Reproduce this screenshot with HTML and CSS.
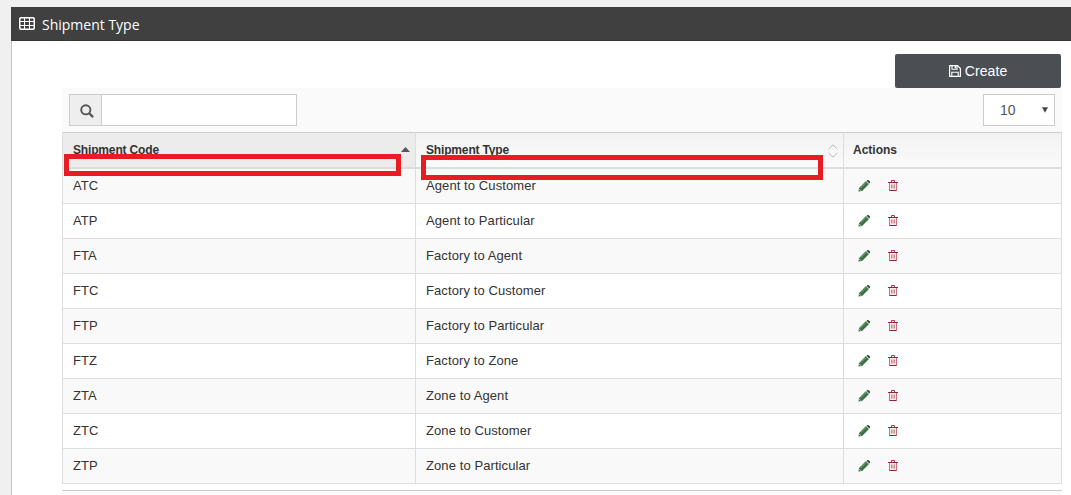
FILE: index.html
```
<!DOCTYPE html>
<html lang="en">
<head>
<meta charset="utf-8">
<title>Shipment Type</title>
<link rel="stylesheet" href="styles.css">
</head>
<body>
<svg class="sprite" aria-hidden="true">
  <symbol id="pencil" viewBox="0 0 12 12">
    <path d="M.4 11.6 1.1 7.9 8 1 11 4 4.1 10.9Z" fill="#3a7046"/>
    <path d="M8.6.7 9.5 0h.8l1.7 1.6v.9l-.8 1Z" fill="#244d38"/>
    <path d="M2.6 7.9 8 2.6" stroke="#8fb77c" stroke-width=".8"/>
    <path d="M1.4 9.2 2.8 10.6" stroke="#e5edcf" stroke-width="1"/>
    <path d="M8 1.4 10.7 4.1" stroke="#d5e2c5" stroke-width=".6"/>
  </symbol>
  <symbol id="trash" viewBox="0 0 10 11">
    <path d="M1.5 2.5V10.5H8.5V2.5" fill="#fbe9e7" stroke="#c9707c"/>
    <path d="M0 2.5H10M1.5 10.5H8.5" stroke="#8c2440" fill="none"/>
    <path d="M3.5 2V.5H6.5V2" fill="none" stroke="#a03a50"/>
    <path d="M3.5 4.5V8.5M5 4.5V8.5M6.5 4.5V8.5" stroke="#b67378" stroke-width=".8"/>
  </symbol>
</svg>
<div class="panel">
  <header class="panel-head">
    <svg class="table-icon" viewBox="0 0 16 13"><rect x=".75" y=".75" width="14.5" height="11.5" rx="1.2" fill="none" stroke="#fff" stroke-width="1.5"/><path d="M1 4.5H15M1 8.5H15M5.5 1V12M10.5 1V12" stroke="#fff"/></svg>
    <h1>Shipment Type</h1>
  </header>
  <main class="content">
    <button class="create"><svg class="save" viewBox="0 0 12 12"><path d="M.6.6H8.5L11.4 3.5V11.4H.6Z" fill="none" stroke="#fff" stroke-width="1.2" stroke-linejoin="round"/><path d="M3 .6V4.2H8V.6M2.8 11.4V7.2H9.2V11.4" fill="none" stroke="#fff" stroke-width="1.1"/><path d="M6.4 1V3.4" stroke="#fff" stroke-width="1.4"/></svg><span>Create</span></button>
    <div class="toolbar">
      <div class="search">
        <span class="addon"><svg viewBox="0 0 14 14"><circle cx="5.8" cy="5.8" r="4.6" fill="none" stroke="#555" stroke-width="1.9"/><path d="M9.2 9.2 13.1 13.1" stroke="#555" stroke-width="2.3"/></svg></span>
        <input type="text" aria-label="Search">
      </div>
      <div class="length"><span>10</span><svg viewBox="0 0 6 6"><path d="M0 .2H6L3 5.8Z" fill="#444"/></svg></div>
    </div>
    <div class="table-wrap">
      <table>
        <colgroup><col class="c1"><col class="c2"><col class="c3"></colgroup>
        <thead><tr>
          <th class="sorted">Shipment Code<svg class="sort asc" viewBox="0 0 9 5"><path d="M0 5 4.5 0 9 5Z" fill="#555"/></svg></th>
          <th>Shipment Type<svg class="sort both" viewBox="0 0 10 14"><path d="M.7 5 5 .8 9.3 5M.7 9 5 13.2 9.3 9" fill="none" stroke="#bbb"/></svg></th>
          <th class="last">Actions</th>
        </tr></thead>
        <tbody>
          <tr><td>ATC</td><td>Agent to Customer</td><td><div class="actions"><svg class="edit"><use href="#pencil"/></svg><svg class="remove"><use href="#trash"/></svg></div></td></tr>
          <tr><td>ATP</td><td>Agent to Particular</td><td><div class="actions"><svg class="edit"><use href="#pencil"/></svg><svg class="remove"><use href="#trash"/></svg></div></td></tr>
          <tr><td>FTA</td><td>Factory to Agent</td><td><div class="actions"><svg class="edit"><use href="#pencil"/></svg><svg class="remove"><use href="#trash"/></svg></div></td></tr>
          <tr><td>FTC</td><td>Factory to Customer</td><td><div class="actions"><svg class="edit"><use href="#pencil"/></svg><svg class="remove"><use href="#trash"/></svg></div></td></tr>
          <tr><td>FTP</td><td>Factory to Particular</td><td><div class="actions"><svg class="edit"><use href="#pencil"/></svg><svg class="remove"><use href="#trash"/></svg></div></td></tr>
          <tr><td>FTZ</td><td>Factory to Zone</td><td><div class="actions"><svg class="edit"><use href="#pencil"/></svg><svg class="remove"><use href="#trash"/></svg></div></td></tr>
          <tr><td>ZTA</td><td>Zone to Agent</td><td><div class="actions"><svg class="edit"><use href="#pencil"/></svg><svg class="remove"><use href="#trash"/></svg></div></td></tr>
          <tr><td>ZTC</td><td>Zone to Customer</td><td><div class="actions"><svg class="edit"><use href="#pencil"/></svg><svg class="remove"><use href="#trash"/></svg></div></td></tr>
          <tr><td>ZTP</td><td>Zone to Particular</td><td><div class="actions"><svg class="edit"><use href="#pencil"/></svg><svg class="remove"><use href="#trash"/></svg></div></td></tr>
        </tbody>
      </table>
      <div class="mark mark-code"></div>
      <div class="mark mark-type"></div>
    </div>
    <div class="table-foot"></div>
  </main>
</div>
</body>
</html>
```
FILE: styles.css
```
* { box-sizing: border-box; }
html, body { height: 100%; overflow: hidden; }
body {
  margin: 0;
  padding: 7px 0 0 11px;
  background: #f0f0f0;
  color: #333;
  font: 13px/18px "Liberation Sans", Arial, sans-serif;
}
svg { display: block; flex: none; }
.sprite { position: absolute; width: 0; height: 0; }
.panel { height: 488px; background: #fff; border-left: 1px solid #c4c4c4; }
.panel-head {
  display: flex;
  gap: 7px;
  height: 34px;
  margin-left: -1px;
  padding: 10px 0 0 8px;
  background: #404040;
  border-bottom: 1px solid #363636;
  color: #fff;
}
.table-icon { width: 16px; height: 13px; }
h1 { margin: -2px 0 0; font: 14px/20px "Open Sans", sans-serif; }
.content { display: flex; flex-direction: column; padding: 13px 9px 0 50px; }
.create {
  display: flex;
  align-items: center;
  justify-content: center;
  align-self: flex-end;
  gap: 4px;
  width: 166px;
  height: 34px;
  margin-right: 1px;
  padding: 0;
  border: 0;
  border-radius: 2px;
  background: #4b4f54;
  color: #fff;
  font: 14px/20px "Liberation Sans", Arial, sans-serif;
  letter-spacing: .1px;
}
.save { width: 12px; height: 12px; }
.toolbar {
  display: flex;
  justify-content: space-between;
  height: 44px;
  padding: 6px 7px;
  background: #fafafa;
}
.search { display: flex; width: 228px; height: 32px; border: 1px solid #ccc; }
.addon { display: flex; align-items: center; justify-content: center; width: 32px; background: #eee; border-right: 1px solid #ccc; padding-left: 2px; padding-top: 2px; }
.addon svg { width: 14px; height: 14px; }
.search input { flex: 1; min-width: 0; border: 0; background: #fff; }
.length {
  display: flex;
  align-items: center;
  justify-content: space-between;
  width: 72px;
  height: 32px;
  padding: 0 6px 0 16px;
  border: 1px solid #ccc;
  background: #fff;
  color: #555;
  font-size: 14px;
}
.length svg { width: 6px; height: 6px; }
.table-wrap { position: relative; height: 352px; }
table { width: 1000px; table-layout: fixed; border-collapse: separate; border-spacing: 0; border-left: 1px solid #ddd; }
.c1 { width: 353px; }
.c2 { width: 428px; }
.c3 { width: 218px; }
th {
  position: relative;
  height: 37px;
  padding: 0 10px;
  border-top: 1px solid #ccc;
  border-right: 1px solid #ddd;
  border-bottom: 2px solid #ddd;
  background: linear-gradient(#f2f2f2, #fafafa);
  font-size: 12px;
  font-weight: 700;
  letter-spacing: -.16px;
  text-align: left;
}
th.sorted { background: #ececec; }
th.last { padding-left: 9px; letter-spacing: 0; }
.sort { position: absolute; }
.asc { width: 9px; height: 5px; right: 5px; top: 14px; }
.both { width: 10px; height: 14px; right: 5px; top: 11px; }
td { height: 35px; padding: 0 10px; border-right: 1px solid #ddd; border-bottom: 1px solid #ddd; letter-spacing: .09px; }
tbody tr:nth-child(odd) { background: #f9f9f9; }
.actions { display: flex; align-items: center; gap: 18px; padding: 0 4px 1px; }
.edit { width: 12px; height: 12px; }
.remove { width: 10px; height: 11px; }
.mark { position: absolute; border: 5px solid #e81c24; }
.mark-code { left: 2px; top: 22px; width: 337px; height: 22px; }
.mark-type { left: 359px; top: 23px; width: 402px; height: 25px; }
.table-foot { height: 5px; margin-top: 6px; border-top: 1px solid #ccc; background: #fafafa; }
```
